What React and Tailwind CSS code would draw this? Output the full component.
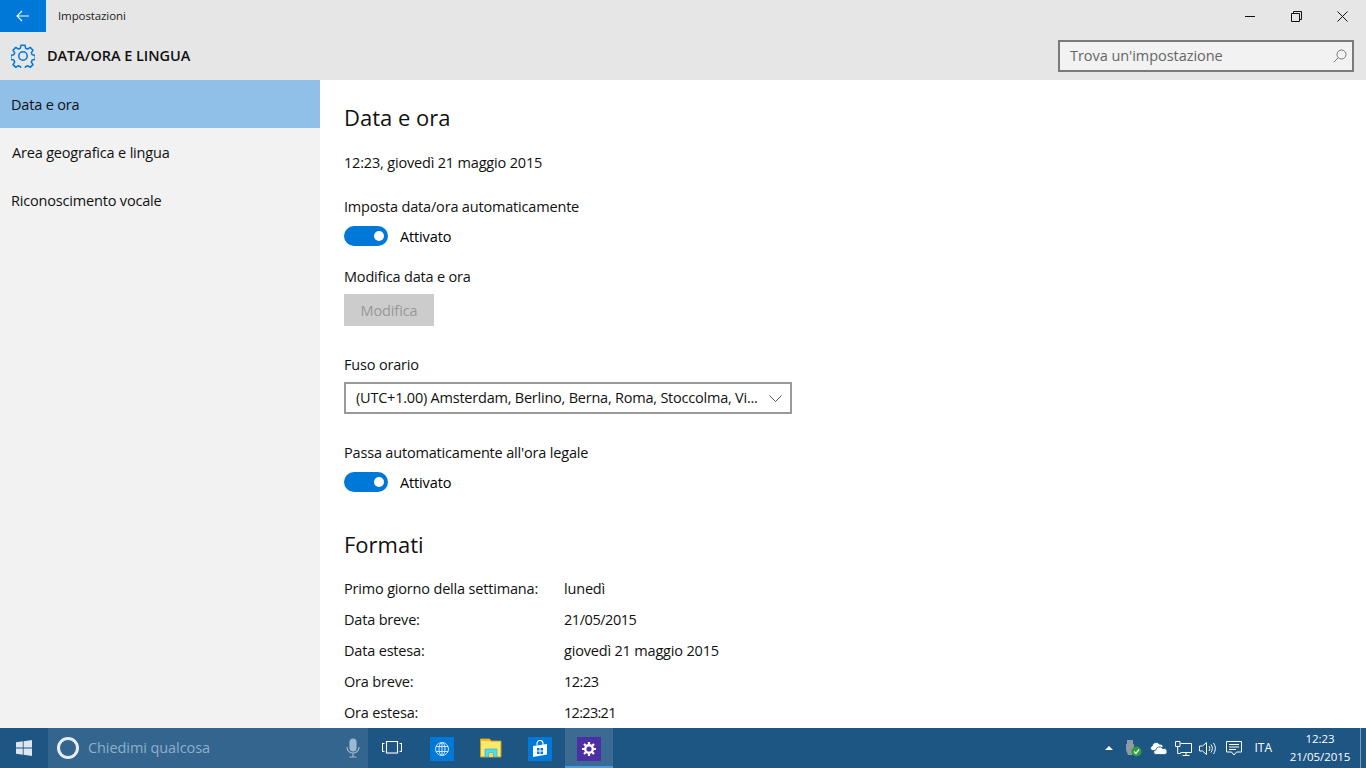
import React from "react";

function Toggle() {
  return (
    <div className="flex h-5 items-center gap-3">
      <div className="flex h-5 w-11 items-center justify-end rounded-full bg-[#0078d7] pr-[4px]">
        <div className="h-[10px] w-[10px] rounded-full bg-white" />
      </div>
      <span className="translate-y-px text-[14.5px] leading-5 tracking-[-0.14px] text-black">Attivato</span>
    </div>
  );
}

function Label({ children, className = "" }) {
  return <div className={"h-5 text-[14.5px] leading-5 tracking-[-0.18px] text-[#111] " + className}>{children}</div>;
}

function FormatRow({ k, children }) {
  return (
    <div className="flex h-[31px] items-center text-[14.5px] tracking-[-0.18px] text-[#111]">
      <span className="w-[220px] shrink-0">{k}</span>
      {children}
    </div>
  );
}

function Gear({ className }) {
  return (
    <svg viewBox="0 0 24 24" className={className} fill="none" stroke="currentColor" strokeWidth="1.500" strokeLinejoin="round">
      <path d="M10 1.200h4l.6 3 2 .9 2.600-1.700 2.800 2.800-1.700 2.600.9 2 3 .6v4l-3 .6-.9 2 1.700 2.600-2.800 2.800-2.600-1.700-2 .9-.6 3h-4l-.6-3-2-.9-2.600 1.700-2.800-2.800 1.700-2.600-.9-2-3-.6v-4l3-.6.9-2-1.700-2.600 2.800-2.800 2.600 1.700 2-.9z" />
      <circle cx="12" cy="12" r="4.200" />
    </svg>
  );
}

export default function App() {
  return (
    <div className="flex h-[768px] w-[1366px] flex-col overflow-hidden bg-white font-['Open_Sans','Noto_Sans',sans-serif]">
      {/* Title bar */}
      <div className="flex h-8 shrink-0 items-center bg-[#e6e6e6]">
        <div className="flex h-8 w-[46px] items-center justify-center bg-[#0078d7] text-white">
          <svg width="14" height="12" viewBox="0 0 14 12" fill="none" stroke="currentColor" strokeWidth="1.100">
            <path d="M13 6H1M6 1 1 6l5 5" />
          </svg>
        </div>
        <span className="ml-3 text-[11.5px] tracking-[-0.1px] text-[#222]">Impostazioni</span>
        <div className="ml-auto mr-px flex h-8 items-center text-[#111]">
          <div className="flex h-8 w-[46px] items-center justify-center">
            <div className="h-px w-[10px] bg-[#111]" />
          </div>
          <div className="flex h-8 w-[46px] items-center justify-center">
            <svg width="11" height="11" viewBox="0 0 11 11" fill="none" stroke="currentColor">
              <path d="M.5 2.500h8v8h-8zM2.500 2.500v-2h8v8h-2" />
            </svg>
          </div>
          <div className="flex h-8 w-[46px] items-center justify-center">
            <svg width="11" height="11" viewBox="0 0 11 11" fill="none" stroke="currentColor">
              <path d="m.5.5 10 10M10.500.5l-10 10" />
            </svg>
          </div>
        </div>
      </div>

      {/* Header */}
      <div className="flex h-12 shrink-0 items-center bg-[#e6e6e6] pl-[11px] pr-3">
        <Gear className="h-6 w-6 text-[#0078d7]" />
        <span className="ml-3 text-[14.5px] font-semibold tracking-[-0.05px] text-[#111]">DATA/ORA E LINGUA</span>
        <div className="ml-auto flex h-8 w-[296px] items-center justify-between border-2 border-[#7a7a7a] bg-[#f2f2f2] pl-[10px] pr-[5px]">
          <span className="text-[14.5px] tracking-[-0.05px] text-[#666]">Trova un'impostazione</span>
          <svg width="14" height="14" viewBox="0 0 14 14" fill="none" stroke="#777" strokeWidth="1">
            <circle cx="8.500" cy="5.500" r="4.500" />
            <path d="M5.200 8.800.8 13.200" />
          </svg>
        </div>
      </div>

      {/* Body */}
      <div className="flex min-h-0 flex-1">
        <nav className="w-80 shrink-0 bg-[#f2f2f2] pt-0 text-[14.5px] tracking-[-0.18px] text-[#111]">
          <div className="flex h-12 items-center bg-[#90bfe8] pl-[11px] pt-[2px]">Data e ora</div>
          <div className="flex h-12 items-center pl-[12px] pt-[2px]">Area geografica e lingua</div>
          <div className="flex h-12 items-center pl-[11px] pt-[2px]">Riconoscimento vocale</div>
        </nav>
        <main className="min-w-0 flex-1 overflow-hidden pl-6 pt-[22px]">
          <h1 className="h-[30px] text-[22px] leading-[30px] text-[#111]">Data e ora</h1>
          <Label className="mt-[21px]">12:23, giovedì 21 maggio 2015</Label>
          <Label className="mt-6">Imposta data/ora automaticamente</Label>
          <div className="mt-[9px]"><Toggle /></div>
          <Label className="mt-[21px]">Modifica data e ora</Label>
          <div className="mt-[7px] flex h-8 w-[90px] items-center justify-center bg-[#cccccc] pt-[2px] text-[14.5px] tracking-[-0.1px] text-[#999]">Modifica</div>
          <Label className="mt-[29px]">Fuso orario</Label>
          <div className="mt-[7px] flex h-8 w-[448px] items-center justify-between border-2 border-[#999] pl-[10px] pr-[8px]">
            <span className="whitespace-nowrap text-[14.5px] tracking-[-0.22px] text-[#111]">(UTC+1.00) Amsterdam, Berlino, Berna, Roma, Stoccolma, Vi...</span>
            <svg width="13" height="7" viewBox="0 0 13 7" fill="none" stroke="#555" strokeWidth="1">
              <path d="m.5.5 6 6 6-6" />
            </svg>
          </div>
          <Label className="mt-[29px]">Passa automaticamente all'ora legale</Label>
          <div className="mt-[9px]"><Toggle /></div>
          <h2 className="mt-[37px] h-[30px] text-[22px] leading-[30px] text-[#111]">Formati</h2>
          <div className="mt-[14px]">
            <FormatRow k="Primo giorno della settimana:"><span>lunedì</span></FormatRow>
            <FormatRow k="Data breve:"><span className="tracking-[-0.45px]">21/05/2015</span></FormatRow>
            <FormatRow k="Data estesa:"><span>giovedì 21 maggio 2015</span></FormatRow>
            <FormatRow k="Ora breve:"><span className="tracking-[-0.5px]">12:23</span></FormatRow>
            <FormatRow k="Ora estesa:"><span className="tracking-[-0.7px]">12:23:21</span></FormatRow>
          </div>
        </main>
      </div>

      {/* Taskbar */}
      <footer className="flex h-10 shrink-0 items-stretch bg-[#1d5583] text-white">
        <div className="flex w-12 items-center justify-center">
          <svg width="16" height="16" viewBox="0 0 16 16" fill="#dce6ef">
            <path d="M0 2.300 6.800 1.300v6.300H0zM7.600 1.200 16 0v7.600H7.600zM0 8.400h6.800v6.300L0 13.700zM7.600 8.400H16V16l-8.400-1.200z" />
          </svg>
        </div>
        <div className="flex w-80 items-center bg-[#33658f] pl-[9px] pr-[8px]">
          <div className="h-[22px] w-[22px] rounded-full border-[3px] border-[#e6edf3]" />
          <span className="ml-[9px] text-[14.5px] tracking-[-0.08px] text-[#8fb0cb]">Chiedimi qualcosa</span>
          <svg className="ml-auto" width="14" height="20" viewBox="0 0 14 20" fill="none" stroke="#9db9d0" strokeWidth="1.200">
            <rect x="4" y="1" width="6" height="12" rx="3" fill="#9db9d0" />
            <path d="M1 9c0 8 12 8 12 0M7 15v4M3.500 19h7" />
          </svg>
        </div>
        <div className="flex w-12 items-center justify-center">
          <svg width="20" height="14" viewBox="0 0 20 14" fill="none" stroke="white" strokeWidth="1.100">
            <rect x="4.500" y=".5" width="11" height="11.500" />
            <path d="M2.500 2.500H.5v8h2M17.500 2.500h2v8h-2" />
          </svg>
        </div>
        <div className="ml-[2px] flex w-12 items-center justify-center pt-px">
          <div className="flex h-6 w-6 items-center justify-center bg-[#0078d7]">
            <svg width="16" height="16" viewBox="0 0 16 16" fill="none" stroke="#cfe4f7" strokeWidth="1">
              <circle cx="8" cy="8" r="6.500" />
              <ellipse cx="8" cy="8" rx="3" ry="6.500" />
              <path d="M8 1.500v13M2 5.500h12M2 10.500h12" />
            </svg>
          </div>
        </div>
        <div className="flex w-[50px] items-center justify-center">
          <svg width="22" height="20" viewBox="0 0 22 20">
            <path d="M.5 1h9l1.500 2h10v16H.5z" fill="#fde968" stroke="#c39a2b" />
            <path d="M.5 1h9l1.500 2H.5z" fill="#f5b81e" />
            <path d="M5 19v-8h12v8h-3.500v-4h-5v4z" fill="#4fdcf0" stroke="#2aa8c8" strokeWidth=".6" />
            <rect x="9" y="15" width="4" height="4" fill="#fbd44c" />
          </svg>
        </div>
        <div className="flex w-[49px] items-center justify-center pr-px pt-px">
          <div className="flex h-6 w-6 items-center justify-center bg-[#0078d7]">
            <svg width="16" height="18" viewBox="0 0 16 18">
              <path d="M5 5V3.500a3 3 0 0 1 6 0V5" fill="none" stroke="white" strokeWidth="1.100" />
              <path d="M1 6 15 4v10.500L1 17z" fill="white" />
              <path d="M5 8h2.500v2.500H5zM8.500 8H11v2.500H8.500zM5 11.500h2.500V14H5zM8.500 11.500H11V14H8.500z" fill="#0078d7" />
            </svg>
          </div>
        </div>
        <div className="relative flex w-12 items-center justify-center bg-[#3b6b93] pt-px">
          <div className="flex h-6 w-6 items-center justify-center bg-[#4c2fa3]">
            <svg width="16" height="16" viewBox="0 0 16 16" fill="none" stroke="white">
              <circle cx="8" cy="8" r="3.800" strokeWidth="2.400" />
              <path d="M8 1v2.500M8 12.500V15M1 8h2.500M12.500 8H15M3 3l1.800 1.800M11.200 11.200 13 13M13 3l-1.800 1.800M4.800 11.200 3 13" strokeWidth="2.200" />
            </svg>
          </div>
          <div className="absolute inset-x-0 bottom-0 h-[2px] bg-[#4a9ae0]" />
        </div>

        <div className="ml-auto flex items-center">
          <svg width="8" height="4" viewBox="0 0 8 4" fill="white" className="mr-[12px]"><path d="M4 0l4 4H0z" /></svg>
          <svg width="18" height="18" viewBox="0 0 18 18" className="mr-[7px]">
            <path d="M2 1h6v4h1v6l-2 5H3L1 11V5h1z" fill="#8d99a4" />
            <circle cx="11.500" cy="12.500" r="5" fill="#2e9e36" />
            <path d="m9 12.500 2 2 3-4" fill="none" stroke="white" strokeWidth="1.300" />
          </svg>
          <svg width="17" height="13" viewBox="0 0 17 13" fill="white" stroke="#1d5583" strokeWidth=".8" className="mr-[8px]">
            <path d="M6 8.500H2.500a2.300 2.300 0 0 1-.3-4.500 4 4 0 0 1 7.300-1.800A3 3 0 0 1 13 4.500" />
            <path d="M6 12.500a2.300 2.300 0 0 1 0-4.600 3.500 3.500 0 0 1 6.500-1.400 3 3 0 0 1 2.500 6z" />
          </svg>
          <svg width="17" height="15" viewBox="0 0 17 15" fill="none" stroke="white" className="mr-[7px]">
            <path d="M5.500 2.500h11v9h-11M11 11.500v3M7.500 14.500h7M.5.500h4.500v5H.5zM2.700 5.500v7h3" />
          </svg>
          <svg width="17" height="15" viewBox="0 0 17 15" fill="none" stroke="white" className="mr-[10px]">
            <path d="M.5 5h3L7.500 1.500v12L3.500 10h-3zM10 5c1 1.500 1 3.500 0 5M12 3.500c1.800 2.500 1.800 5.500 0 8M14.500 2c2.400 3.500 2.400 7.500 0 11" />
          </svg>
          <svg width="16" height="16" viewBox="0 0 16 16" fill="none" stroke="white" className="mr-[12px]">
            <path d="M.5 1.500h15v10.500h-5L8 15l-2.500-3H.5zM3 4.500h10M3 7h10M3 9.500h7" />
          </svg>
          <span className="mr-[18px] text-[12px]">ITA</span>
          <div className="mr-[10px] flex w-[60px] flex-col items-center text-[11.5px] leading-[18px] tracking-[-0.05px]">
            <span>12:23</span>
            <span>21/05/2015</span>
          </div>
          <div className="h-10 w-[6px] border-l border-[#7d9db8]" />
        </div>
      </footer>
    </div>
  );
}
